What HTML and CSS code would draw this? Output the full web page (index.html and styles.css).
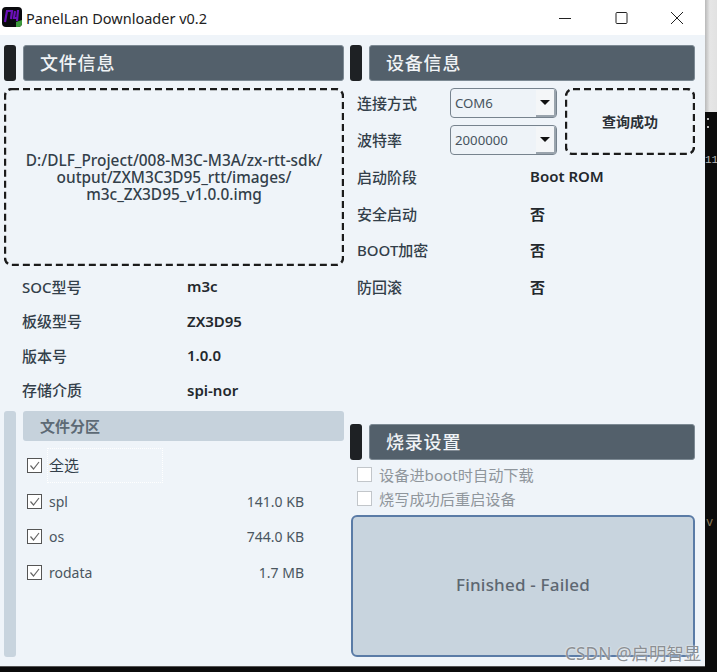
FILE: index.html
```html
<!DOCTYPE html>
<html lang="en">
  <head>
    <meta charset="UTF-8" />
    <meta name="viewport" content="width=device-width, initial-scale=1.0" />
    <title>PanelLan Downloader v0.2</title>
    <link rel="stylesheet" href="styles.css">
  </head>

  <body>
    <div class="window">
      <div class="titlebar">
        <svg class="logo" width="20" height="20" viewBox="0 0 20 20">
          <rect width="20" height="20" rx="4" fill="#0a0a0e" />
          <path d="M3 15 L5 4 L10 4 L9 12 M13 4 L12 11 L16 11 M16 3 L15 14" fill="none" stroke="#6a10b8" stroke-width="2.2" />
          <path d="M14 20 L14 15 L20 13 L20 16 Q20 20 16 20 Z" fill="#3c9a3c" />
        </svg>
        <span class="app-name">PanelLan Downloader v0.2</span>
        <div class="win-btns">
          <svg width="14" height="14" viewBox="0 0 14 14"><path d="M1 7.5 H13" stroke="#222" stroke-width="1" /></svg>
          <svg width="14" height="14" viewBox="0 0 14 14"><rect x="2" y="1.5" width="11" height="11" fill="none" stroke="#222" stroke-width="1" rx="1" /></svg>
          <svg width="14" height="14" viewBox="0 0 14 14"><path d="M1 1 L13 13 M13 1 L1 13" stroke="#222" stroke-width="1" /></svg>
        </div>
      </div>

      <div class="content">
        <!-- left column -->
        <div class="col">
          <div class="head">
            <div class="tab"></div>
            <div class="bar">文件信息</div>
          </div>
          <div class="dropbox">
            <svg class="dash" width="340" height="178"><rect x="1" y="1" width="338" height="176" rx="7" /></svg>
            D:/DLF_Project/008-M3C-M3A/zx-rtt-sdk/<br>output/ZXM3C3D95_rtt/images/<br>m3c_ZX3D95_v1.0.0.img
          </div>
          <div class="file-info">
            <div class="row"><span class="key">SOC型号</span><span class="val">m3c</span></div>
            <div class="row"><span class="key">板级型号</span><span class="val">ZX3D95</span></div>
            <div class="row"><span class="key">版本号</span><span class="val">1.0.0</span></div>
            <div class="row"><span class="key">存储介质</span><span class="val">spi-nor</span></div>
          </div>
          <div class="partitions">
            <div class="tab tab-light"></div>
            <div class="part-body">
              <div class="bar bar-light">文件分区</div>
              <div class="part-row">
                <span class="check"><svg width="13" height="13" viewBox="0 0 13 13"><path d="M2.5 6.5 L5.5 10 L11 3" fill="none" stroke="#666" stroke-width="1.2" /></svg></span>
                <span class="part-name focused">全选</span>
              </div>
              <div class="part-row">
                <span class="check"><svg width="13" height="13" viewBox="0 0 13 13"><path d="M2.5 6.5 L5.5 10 L11 3" fill="none" stroke="#666" stroke-width="1.2" /></svg></span>
                <span class="part-name">spl</span><span class="part-size">141.0 KB</span>
              </div>
              <div class="part-row">
                <span class="check"><svg width="13" height="13" viewBox="0 0 13 13"><path d="M2.5 6.5 L5.5 10 L11 3" fill="none" stroke="#666" stroke-width="1.2" /></svg></span>
                <span class="part-name">os</span><span class="part-size">744.0 KB</span>
              </div>
              <div class="part-row">
                <span class="check"><svg width="13" height="13" viewBox="0 0 13 13"><path d="M2.5 6.5 L5.5 10 L11 3" fill="none" stroke="#666" stroke-width="1.2" /></svg></span>
                <span class="part-name">rodata</span><span class="part-size">1.7 MB</span>
              </div>
            </div>
          </div>
        </div>

        <!-- right column -->
        <div class="col">
          <div class="head">
            <div class="tab"></div>
            <div class="bar">设备信息</div>
          </div>
          <div class="connect">
            <div class="connect-rows">
              <div class="connect-row">
                <span class="key">连接方式</span>
                <div class="combo"><span>COM6</span><span class="arrow"></span></div>
              </div>
              <div class="connect-row">
                <span class="key">波特率</span>
                <div class="combo"><span>2000000</span><span class="arrow"></span></div>
              </div>
            </div>
            <div class="query">
              <svg class="dash" width="130" height="67"><rect x="1" y="1" width="128" height="65" rx="7" /></svg>
              查询成功
            </div>
          </div>
          <div class="dev-info">
            <div class="row"><span class="key">启动阶段</span><span class="val">Boot ROM</span></div>
            <div class="row"><span class="key">安全启动</span><span class="val">否</span></div>
            <div class="row"><span class="key">BOOT加密</span><span class="val">否</span></div>
            <div class="row"><span class="key">防回滚</span><span class="val">否</span></div>
          </div>
          <div class="burn">
            <div class="head">
              <div class="tab"></div>
              <div class="bar">烧录设置</div>
            </div>
            <div class="opts">
              <div class="opt"><span class="check check-off"></span>设备进boot时自动下载</div>
              <div class="opt"><span class="check check-off"></span>烧写成功后重启设备</div>
            </div>
            <div class="progress">Finished - Failed</div>
          </div>
        </div>
      </div>
    </div>

    <div class="behind">
      <div class="behind-top"></div>
      <div class="behind-term">
        <span class="term-a"></span>
        <span class="term-b">11</span>
        <span class="term-c">v</span>
      </div>
    </div>

    <div class="watermark">CSDN @启明智显</div>
  </body>
</html>
```

FILE: styles.css
```css
body {
  margin: 0;
  width: 717px;
  height: 672px;
  overflow: hidden;
  display: flex;
  align-items: flex-start;
  background: #0b0b0b;
  font-family: "Noto Sans", "Noto Sans CJK SC", sans-serif;
  color: #333f4a;
}

.window {
  width: 705px;
  height: 667px;
  flex-shrink: 0;
  display: flex;
  flex-direction: column;
  background: #eff4f9;
  border-bottom: 1px solid #555;
  box-sizing: border-box;
}

.titlebar {
  height: 35px;
  flex-shrink: 0;
  display: flex;
  align-items: center;
  background: #fff;
  padding-left: 2px;
}

.logo {
  margin-top: -1px;
}

.app-name {
  margin-left: 4px;
  font-size: 14.5px;
  color: #222;
}

.win-btns {
  margin-left: auto;
  display: flex;
  gap: 42px;
  padding-right: 21px;
}

.content {
  flex: 1;
  display: grid;
  grid-template-columns: 340px 345px;
  column-gap: 6px;
  padding: 10px 0 9px 4px;
}

.col {
  display: flex;
  flex-direction: column;
  min-height: 0;
}

/* section heading: dark tab and a wide bar */
.head {
  display: flex;
  gap: 7px;
  height: 36px;
  flex-shrink: 0;
}

.tab {
  width: 12px;
  flex-shrink: 0;
  background: #1e2124;
  border-radius: 3px;
}

.bar {
  flex: 1;
  background: #53606b;
  border: 1px solid #7d8a94;
  border-radius: 3px;
  box-sizing: border-box;
  padding-left: 16px;
  font-size: 18px;
  font-weight: 500;
  line-height: 34px;
  letter-spacing: 0.8px;
  color: #f0f3f6;
}

.tab-light {
  background: #c8d4de;
}

.bar-light {
  flex: none;
  height: 30px;
  margin-bottom: 7px;
  background: #c6d2dc;
  border: none;
  padding-left: 17px;
  font-size: 15px;
  font-weight: 700;
  line-height: 30px;
  letter-spacing: 0;
  color: #5d6a75;
}

/* dashed frames are drawn with svg, the css dash is too short */
.dash {
  position: absolute;
  left: 0;
  top: 0;
}

.dash rect {
  fill: none;
  stroke: #1b1b1b;
  stroke-width: 2.4;
  stroke-dasharray: 7 4;
}

.dropbox {
  position: relative;
  margin-top: 7px;
  height: 178px;
  box-sizing: border-box;
  display: flex;
  flex-direction: column;
  align-items: center;
  justify-content: center;
  text-align: center;
  font-size: 15.4px;
  font-weight: 500;
  line-height: 17px;
  padding-top: 1px;
}

.row {
  display: flex;
  align-items: center;
  font-size: 15px;
  font-weight: 500;
}

.key {
  color: #333f4a;
  font-size: 15px;
  font-weight: 500;
}

.val {
  color: #23282d;
  font-weight: 600;
}

.file-info {
  margin-top: 3px;
  padding-left: 18px;
  height: 138px;
  display: grid;
  grid-auto-rows: 34.5px;
}

.file-info .key {
  width: 165px;
}

.partitions {
  margin-top: 4px;
  flex: 1;
  display: flex;
  gap: 7px;
}

.part-body {
  flex: 1;
  display: flex;
  flex-direction: column;
}

.part-row {
  display: flex;
  align-items: center;
  height: 35.5px;
  padding-left: 4px;
  font-size: 14px;
  color: #4a5660;
}

.check {
  width: 13px;
  height: 13px;
  flex-shrink: 0;
  display: block;
  background: #fff;
  border: 1px solid #555;
  margin-right: 7px;
}

.check svg {
  display: block;
}

.part-name {
  line-height: 35px;
}

.focused {
  width: 116px;
  padding-left: 1px;
  border: 1px dotted #fff;
  margin-left: -2px;
  box-sizing: border-box;
  height: 35px;
  line-height: 33px;
  font-size: 15px;
  color: #333f4a;
}

.part-size {
  margin-left: auto;
  padding-right: 40px;
}

.connect {
  margin-top: 7px;
  height: 67px;
  display: flex;
  flex-shrink: 0;
}

.connect-rows {
  display: flex;
  flex-direction: column;
  justify-content: space-between;
  width: 207px;
  margin-left: 7px;
}

.connect-row {
  display: flex;
  align-items: center;
  height: 30px;
}

.connect-row .key {
  width: 93px;
  margin-top: -1px;
}

.combo {
  width: 107px;
  height: 30px;
  box-sizing: border-box;
  display: flex;
  align-items: center;
  justify-content: space-between;
  border: 1px solid #77838e;
  border-radius: 4px;
  background: #eef3f8;
  font-size: 13.2px;
  color: #47535e;
  padding-left: 4px;
}

.arrow {
  width: 20px;
  height: 27px;
  box-sizing: border-box;
  background: #f4f6f8;
  border-right: 2px solid #9aa4ad;
  border-bottom: 2px solid #9aa4ad;
  position: relative;
}

.arrow::after {
  content: "";
  position: absolute;
  left: 4px;
  top: 10px;
  border-left: 5px solid transparent;
  border-right: 5px solid transparent;
  border-top: 5px solid #111;
}

.query {
  position: relative;
  margin-left: auto;
  width: 130px;
  box-sizing: border-box;
  display: flex;
  align-items: center;
  justify-content: center;
  padding-bottom: 1px;
  font-size: 14px;
  font-weight: 600;
  color: #2a3036;
}

.dev-info {
  margin-top: 3px;
  padding-left: 7px;
  display: grid;
  grid-auto-rows: 36.7px;
}

.dev-info .key {
  width: 173px;
}

.burn {
  margin-top: auto;
  display: flex;
  flex-direction: column;
}

.opts {
  display: flex;
  flex-direction: column;
  margin-top: 2px;
  padding-left: 7px;
}

.opt {
  display: flex;
  align-items: center;
  height: 24px;
  font-size: 15.2px;
  color: #8f969c;
}

.check-off {
  border-color: #c2c6ca;
}

.progress {
  margin-top: 5px;
  margin-left: 1px;
  height: 142px;
  box-sizing: border-box;
  display: flex;
  align-items: center;
  justify-content: center;
  padding-bottom: 3px;
  background: #c8d4de;
  border: 2px solid #5a7ba6;
  border-radius: 6px;
  font-size: 17px;
  font-weight: 500;
  letter-spacing: 0.2px;
  color: #5d6771;
}

/* what is showing behind the app window */
.behind {
  flex: 1;
  height: 672px;
  display: flex;
  flex-direction: column;
}

.behind-top {
  height: 112px;
  background: linear-gradient(90deg, #b9b9b9, #e6e6e6 40%, #e2e2e2);
  flex-shrink: 0;
}

.behind-term {
  flex: 1;
  position: relative;
  font-size: 12px;
  font-family: "Liberation Mono", monospace;
  color: #b9b9b9;
}

.term-a {
  position: absolute;
  left: 2px;
  top: 6px;
  width: 2px;
  height: 2px;
  background: #b9b9b9;
  box-shadow: 0 8px 0 #b9b9b9;
}

.term-b {
  position: absolute;
  left: 0;
  top: 42px;
  font-size: 11px;
}

.term-c {
  position: absolute;
  left: 1px;
  top: 404px;
  color: #8a7a5a;
}

.watermark {
  position: absolute;
  left: 565px;
  top: 640px;
  font-size: 17.4px;
  color: #8b8f93;
  text-shadow: 0 0 2px #fff;
  white-space: nowrap;
}
```
